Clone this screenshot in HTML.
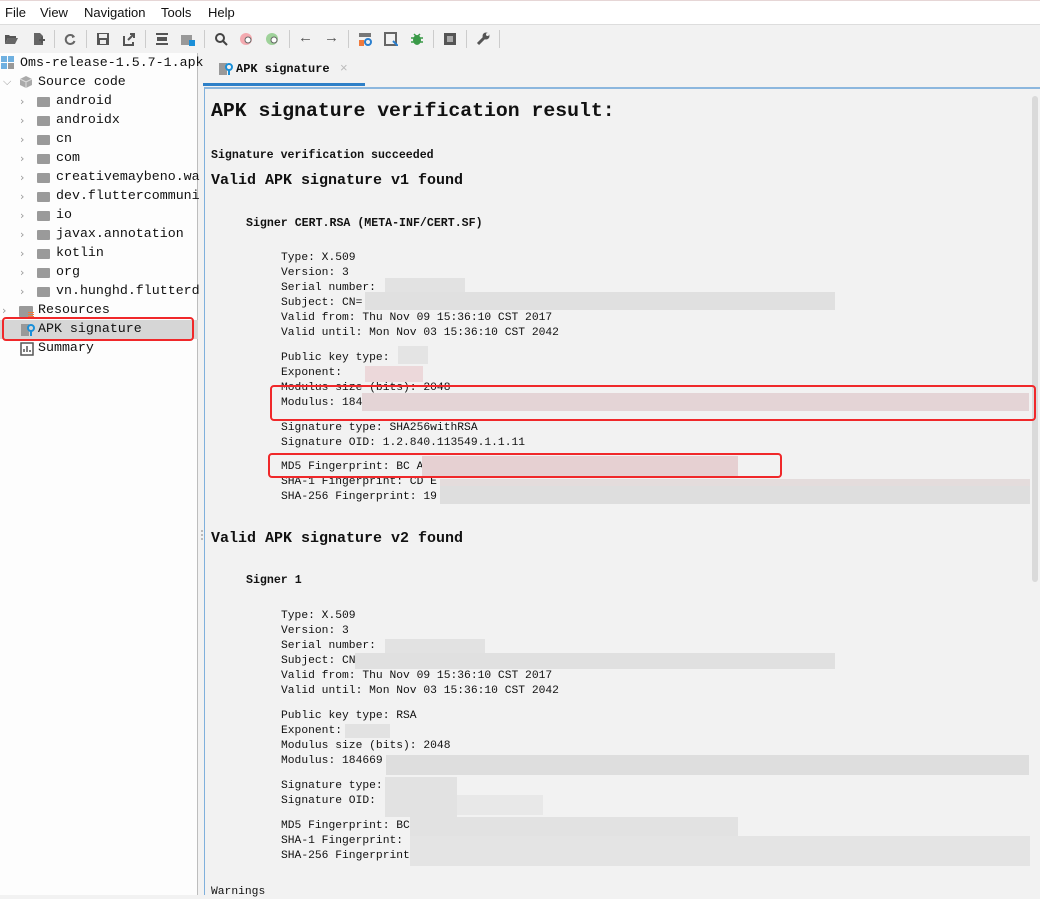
<!DOCTYPE html>
<html><head><meta charset="utf-8"><style>
*{margin:0;padding:0;box-sizing:border-box}
body{width:1040px;height:895px;overflow:hidden;background:#f2f2f2;font-family:"Liberation Sans",sans-serif;position:relative}
.a{position:absolute;white-space:nowrap}
.menu{top:0;left:0;width:1040px;height:25px;background:#fff;border-top:1px solid #e6d6d6;border-bottom:1px solid #ddd;font-size:13px;color:#111}
.menu span{position:absolute;top:4px}
.tb{top:25px;left:0;width:1040px;height:28px;background:#f2f2f2}
.ic{position:absolute;top:32px;width:14px;height:14px}
.sep{position:absolute;top:30px;width:1px;height:18px;background:#ccc}
.left{top:53px;left:0;width:198px;height:842px;background:#fdfdfd;border-right:1px solid #bdbdbd}
.t{position:absolute;font-family:"Liberation Mono",monospace;font-size:13.3px;color:#111;white-space:nowrap}
.chev{position:absolute;font-size:11px;color:#999;font-family:"DejaVu Sans",sans-serif}
.fold{position:absolute;width:13px;height:10px;background:#9a9a9a;border-radius:1px}
.content{top:87px;left:204px;width:836px;height:808px;background:#f2f2f2;border-left:1px solid #7fb0dc;border-top:2px solid #8cb7de}
.m{position:absolute;font-family:"Liberation Mono",monospace;font-size:11.3px;color:#111;white-space:nowrap;line-height:14px}
.b{font-weight:bold}
.bl{position:absolute;background:#dcdcdc;height:14px}
.pk{position:absolute;background:#e8d0d2;height:14px}
.red{position:absolute;border:2px solid #f0282a;border-radius:4px}
</style></head><body>
<div class="a menu"><span style="left:5px">File</span><span style="left:40px">View</span><span style="left:84px">Navigation</span><span style="left:161px">Tools</span><span style="left:208px">Help</span></div>
<div class="a tb"></div>
<svg class="ic" style="left:4px" viewBox="0 0 14 14"><path d="M1 3h4l1 1h6v2H4L1 12z" fill="#555"/><path d="M4 6h10l-3 6H1z" fill="#666"/></svg>
<svg class="ic" style="left:31px" viewBox="0 0 14 14"><path d="M3 1h6l3 3v9H3z" fill="#666"/><path d="M8 8h6M11 5v6" stroke="#555" stroke-width="2"/></svg>
<div class="sep" style="left:54px"></div>
<svg class="ic" style="left:63px" viewBox="0 0 14 14"><path d="M11 5A4.5 4.5 0 1 0 11.5 9" fill="none" stroke="#666" stroke-width="2"/><path d="M9 2l3 3-3 1z" fill="#666"/></svg>
<div class="sep" style="left:86px"></div>
<svg class="ic" style="left:96px" viewBox="0 0 14 14"><rect x="1" y="1" width="12" height="12" fill="#555"/><rect x="3" y="2" width="8" height="4" fill="#eee"/><rect x="4" y="8" width="6" height="4" fill="#eee"/></svg>
<svg class="ic" style="left:122px" viewBox="0 0 14 14"><path d="M2 4v9h9v-3" fill="none" stroke="#555" stroke-width="2"/><path d="M6 8l6-6M8 2h4v4" fill="none" stroke="#555" stroke-width="2"/></svg>
<div class="sep" style="left:145px"></div>
<svg class="ic" style="left:155px" viewBox="0 0 14 14"><path d="M1 2h12M1 12h12" stroke="#555" stroke-width="2"/><rect x="2" y="5" width="10" height="4" fill="#555"/></svg>
<svg class="ic" style="left:181px" viewBox="0 0 14 14"><rect x="0" y="3" width="11" height="10" fill="#999"/><rect x="8" y="8" width="6" height="6" fill="#1a8fd8"/></svg>
<div class="sep" style="left:204px"></div>
<svg class="ic" style="left:214px" viewBox="0 0 14 14"><circle cx="6" cy="6" r="4" fill="none" stroke="#444" stroke-width="2"/><path d="M9 9l4 4" stroke="#444" stroke-width="2"/></svg>
<svg class="ic" style="left:240px" viewBox="0 0 14 14"><circle cx="6" cy="7" r="6" fill="#f4aab0"/><circle cx="8" cy="8" r="3" fill="#fff" stroke="#666"/></svg>
<svg class="ic" style="left:266px" viewBox="0 0 14 14"><circle cx="6" cy="7" r="6" fill="#9fd29a"/><circle cx="8" cy="8" r="3" fill="#fff" stroke="#666"/></svg>
<div class="sep" style="left:289px"></div>
<div class="a" style="left:298px;top:29px;font-size:15px;color:#555">←</div>
<div class="a" style="left:324px;top:29px;font-size:15px;color:#555">→</div>
<div class="sep" style="left:348px"></div>
<svg class="ic" style="left:358px" viewBox="0 0 14 14"><rect x="1" y="1" width="12" height="4" fill="#777"/><rect x="1" y="8" width="5" height="6" fill="#f07a3c"/><circle cx="10" cy="10" r="3" fill="none" stroke="#2a7fcf" stroke-width="2"/></svg>
<svg class="ic" style="left:384px" viewBox="0 0 14 14"><rect x="1" y="1" width="11" height="12" fill="none" stroke="#666" stroke-width="2"/><path d="M9 9l5 5" stroke="#2a7fcf" stroke-width="2"/></svg>
<svg class="ic" style="left:410px" viewBox="0 0 14 14"><ellipse cx="7" cy="8" rx="4" ry="5" fill="#3a9a48"/><path d="M1 6h12M1 10h12M4 2l2 2M10 2l-2 2" stroke="#3a9a48" stroke-width="1.5"/></svg>
<div class="sep" style="left:433px"></div>
<svg class="ic" style="left:443px" viewBox="0 0 14 14"><rect x="1" y="1" width="12" height="12" fill="#555"/><path d="M4 5h6M4 7h6M4 9h6" stroke="#fff"/></svg>
<div class="sep" style="left:466px"></div>
<svg class="ic" style="left:476px" viewBox="0 0 14 14"><path d="M2 12l6-6" stroke="#555" stroke-width="3"/><circle cx="10" cy="4" r="3.5" fill="#555"/><circle cx="11.5" cy="2.5" r="1.5" fill="#f2f2f2"/></svg>
<div class="sep" style="left:499px"></div>

<div class="a left">
<svg style="position:absolute;left:1px;top:3px" width="13" height="13"><rect x="0" y="0" width="6" height="6" fill="#6fb0e0"/><rect x="7" y="0" width="6" height="6" fill="#6fb0e0"/><rect x="0" y="7" width="6" height="6" fill="#6fb0e0"/><rect x="7" y="7" width="6" height="6" fill="#999"/></svg>
<div class="t" style="left:20px;top:2px">Oms-release-1.5.7-1.apk</div>
<div class="chev" style="left:3px;top:22px">⌵</div>
<svg style="position:absolute;left:19px;top:22px" width="14" height="14"><path d="M7 1l6 3v6l-6 3-6-3V4z" fill="#aaa"/><path d="M1 4l6 3 6-3M7 7v6" stroke="#ddd" fill="none"/></svg>
<div class="t" style="left:38px;top:21px">Source code</div>
</div>
<div class="a" style="left:0;top:93px;width:198px">
<div class="chev" style="left:20px;top:2px">›</div><div class="fold" style="left:37px;top:4px"></div><div class="t" style="left:56px;top:0">android</div>
<div class="chev" style="left:20px;top:21px">›</div><div class="fold" style="left:37px;top:23px"></div><div class="t" style="left:56px;top:19px">androidx</div>
<div class="chev" style="left:20px;top:40px">›</div><div class="fold" style="left:37px;top:42px"></div><div class="t" style="left:56px;top:38px">cn</div>
<div class="chev" style="left:20px;top:59px">›</div><div class="fold" style="left:37px;top:61px"></div><div class="t" style="left:56px;top:57px">com</div>
<div class="chev" style="left:20px;top:78px">›</div><div class="fold" style="left:37px;top:80px"></div><div class="t" style="left:56px;top:76px">creativemaybeno.wa</div>
<div class="chev" style="left:20px;top:97px">›</div><div class="fold" style="left:37px;top:99px"></div><div class="t" style="left:56px;top:95px">dev.fluttercommuni</div>
<div class="chev" style="left:20px;top:116px">›</div><div class="fold" style="left:37px;top:118px"></div><div class="t" style="left:56px;top:114px">io</div>
<div class="chev" style="left:20px;top:135px">›</div><div class="fold" style="left:37px;top:137px"></div><div class="t" style="left:56px;top:133px">javax.annotation</div>
<div class="chev" style="left:20px;top:154px">›</div><div class="fold" style="left:37px;top:156px"></div><div class="t" style="left:56px;top:152px">kotlin</div>
<div class="chev" style="left:20px;top:173px">›</div><div class="fold" style="left:37px;top:175px"></div><div class="t" style="left:56px;top:171px">org</div>
<div class="chev" style="left:20px;top:192px">›</div><div class="fold" style="left:37px;top:194px"></div><div class="t" style="left:56px;top:190px">vn.hunghd.flutterd</div>
<div class="chev" style="left:2px;top:211px">›</div><div class="fold" style="left:19px;top:213px;width:14px;height:11px"></div><div style="position:absolute;left:28px;top:219px;width:6px;height:6px;background:repeating-linear-gradient(#f07a3c 0 1px,transparent 1px 2px)"></div><div class="t" style="left:38px;top:209px">Resources</div>
<div style="position:absolute;left:0;top:227px;width:198px;height:19px;background:#d6d6d6"></div>
<svg style="position:absolute;left:20px;top:230px" width="15" height="14"><rect x="1" y="1" width="8" height="12" fill="#999"/><circle cx="11" cy="5" r="3" fill="none" stroke="#1a8fd8" stroke-width="2"/><path d="M11 8v5" stroke="#1a8fd8" stroke-width="2"/></svg>
<div class="t" style="left:38px;top:228px">APK signature</div>
<div class="red" style="left:2px;top:224px;width:192px;height:24px"></div>
<svg style="position:absolute;left:20px;top:249px" width="14" height="14"><rect x="1" y="1" width="12" height="12" fill="none" stroke="#555" stroke-width="1.5"/><path d="M4 10V7M7 10V4M10 10V8" stroke="#555" stroke-width="1.5"/></svg>
<div class="t" style="left:38px;top:247px">Summary</div>
</div>
<div class="a" style="left:201px;top:530px;width:2px;height:12px;background:repeating-linear-gradient(#bbb 0 2px,transparent 2px 4px)"></div>

<svg style="position:absolute;left:218px;top:62px" width="15" height="14"><rect x="1" y="1" width="8" height="12" fill="#999"/><circle cx="11" cy="5" r="3" fill="none" stroke="#1a8fd8" stroke-width="2"/><path d="M11 8v5" stroke="#1a8fd8" stroke-width="2"/></svg>
<div class="a" style="left:236px;top:62px;font-family:'Liberation Mono',monospace;font-size:12px;font-weight:bold;color:#111">APK signature</div>
<div class="a" style="left:340px;top:60px;font-size:13px;color:#bbb">×</div>
<div class="a" style="left:203px;top:83px;width:162px;height:3px;background:#2e80c8"></div>

<div class="a content">
<div class="a" style="left:827px;top:7px;width:6px;height:486px;background:#dadada;border-radius:3px"></div>
</div>

<div class="m b" style="left:211px;top:99px;font-size:19.8px;line-height:24px">APK signature verification result:</div>
<div class="m b" style="left:211px;top:149px;font-size:11.6px">Signature verification succeeded</div>
<div class="m b" style="left:211px;top:172px;font-size:15px;line-height:18px">Valid APK signature v1 found</div>
<div class="m b" style="left:246px;top:217px;font-size:11.6px">Signer CERT.RSA (META-INF/CERT.SF)</div>

<div class="m" style="left:281px;top:251px">Type: X.509</div>
<div class="m" style="left:281px;top:266px">Version: 3</div>
<div class="m" style="left:281px;top:281px">Serial number:</div>
<div class="m" style="left:281px;top:296px">Subject: CN=</div>
<div class="m" style="left:281px;top:311px">Valid from: Thu Nov 09 15:36:10 CST 2017</div>
<div class="m" style="left:281px;top:326px">Valid until: Mon Nov 03 15:36:10 CST 2042</div>
<div class="bl" style="left:385px;top:278px;width:80px;height:16px;background:#e2e2e2"></div>
<div class="bl" style="left:365px;top:292px;width:470px;height:18px;background:#e0e0e0"></div>
<div class="m" style="left:281px;top:351px">Public key type:</div>
<div class="m" style="left:281px;top:366px">Exponent:</div>
<div class="bl" style="left:398px;top:346px;width:30px;height:18px;background:#e4e4e4"></div>
<div class="pk" style="left:365px;top:366px;width:58px;height:16px;background:#ecd8da"></div>
<div class="m" style="left:281px;top:381px">Modulus size (bits): 2048</div>
<div class="m" style="left:281px;top:396px">Modulus: 184</div>
<div class="pk" style="left:362px;top:393px;width:667px;height:18px;background:#e4d4d6"></div>
<div class="red" style="left:270px;top:385px;width:766px;height:36px"></div>
<div class="m" style="left:281px;top:421px">Signature type: SHA256withRSA</div>
<div class="m" style="left:281px;top:436px">Signature OID: 1.2.840.113549.1.1.11</div>
<div class="m" style="left:281px;top:460px">MD5 Fingerprint: BC A</div>
<div class="m" style="left:281px;top:475px">SHA-1 Fingerprint: CD E</div>
<div class="m" style="left:281px;top:490px">SHA-256 Fingerprint: 19</div>
<div class="pk" style="left:422px;top:456px;width:316px;height:20px;background:#e6d0d2"></div>
<div class="bl" style="left:440px;top:479px;width:590px;height:8px;background:#e4dcdc"></div>
<div class="bl" style="left:440px;top:486px;width:590px;height:18px;background:#dedede"></div>
<div class="red" style="left:268px;top:453px;width:514px;height:25px"></div>

<div class="m b" style="left:211px;top:530px;font-size:15px;line-height:18px">Valid APK signature v2 found</div>
<div class="m b" style="left:246px;top:574px;font-size:11.6px">Signer 1</div>
<div class="m" style="left:281px;top:609px">Type: X.509</div>
<div class="m" style="left:281px;top:624px">Version: 3</div>
<div class="m" style="left:281px;top:639px">Serial number:</div>
<div class="m" style="left:281px;top:654px">Subject: CN</div>
<div class="m" style="left:281px;top:669px">Valid from: Thu Nov 09 15:36:10 CST 2017</div>
<div class="m" style="left:281px;top:684px">Valid until: Mon Nov 03 15:36:10 CST 2042</div>
<div class="bl" style="left:385px;top:639px;width:100px;height:14px;background:#e2e2e2"></div>
<div class="bl" style="left:355px;top:653px;width:480px;height:16px;background:#e0e0e0"></div>
<div class="m" style="left:281px;top:709px">Public key type: RSA</div>
<div class="m" style="left:281px;top:724px">Exponent:</div>
<div class="bl" style="left:345px;top:724px;width:45px;height:14px;background:#e2e2e2"></div>
<div class="m" style="left:281px;top:739px">Modulus size (bits): 2048</div>
<div class="m" style="left:281px;top:754px">Modulus: 184669</div>
<div class="bl" style="left:386px;top:755px;width:643px;height:20px;background:#dedede"></div>
<div class="m" style="left:281px;top:779px">Signature type:</div>
<div class="m" style="left:281px;top:794px">Signature OID:</div>
<div class="bl" style="left:385px;top:777px;width:72px;height:40px;background:#e2e2e2"></div>
<div class="bl" style="left:457px;top:795px;width:86px;height:20px;background:#e8e8e8"></div>
<div class="m" style="left:281px;top:819px">MD5 Fingerprint: BC</div>
<div class="m" style="left:281px;top:834px">SHA-1 Fingerprint:</div>
<div class="m" style="left:281px;top:849px">SHA-256 Fingerprint</div>
<div class="bl" style="left:410px;top:817px;width:328px;height:20px;background:#e2e2e2"></div>
<div class="bl" style="left:410px;top:836px;width:620px;height:30px;background:#e4e4e4"></div>
<div class="m" style="left:211px;top:885px">Warnings</div>
</body></html>
